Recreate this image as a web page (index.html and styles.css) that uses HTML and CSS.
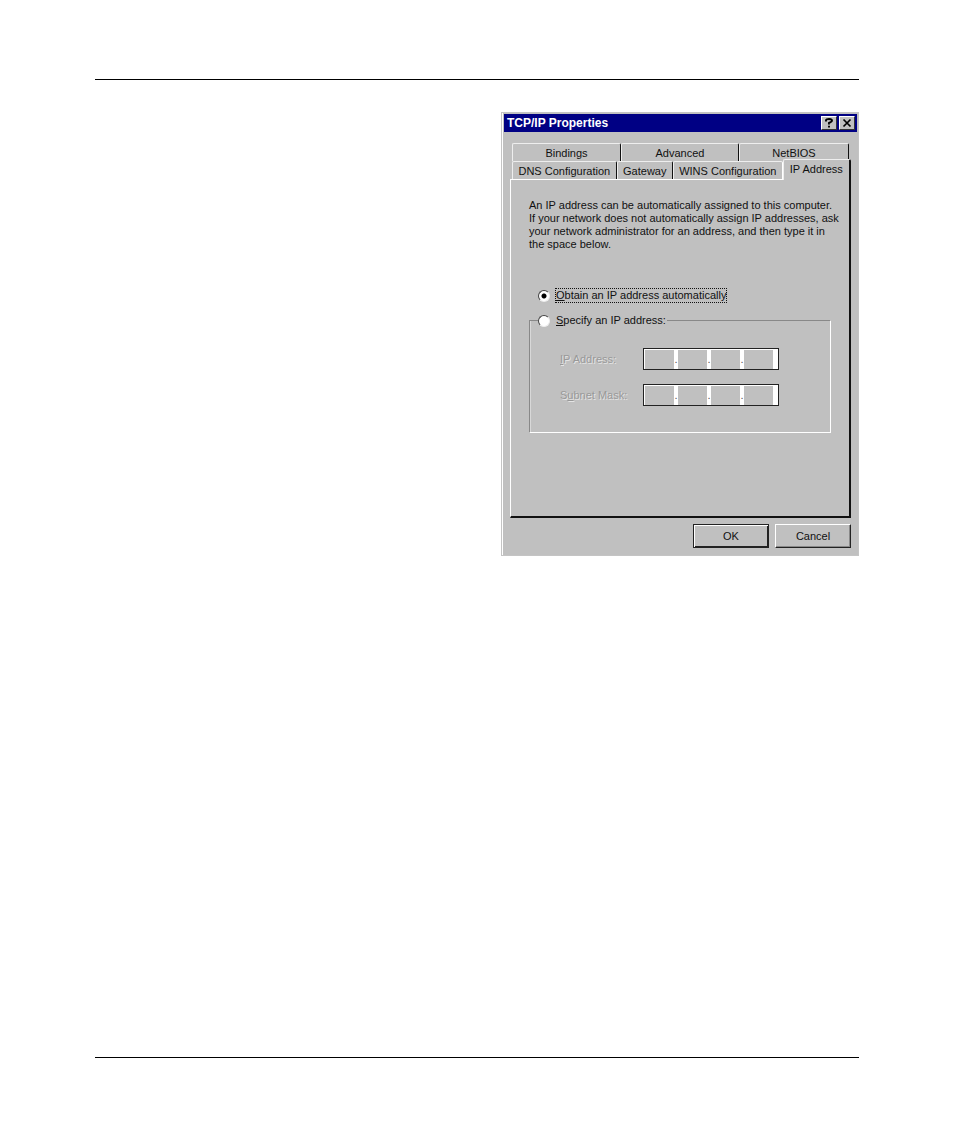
FILE: index.html
```html
<!DOCTYPE html>
<html lang="en">
<head>
<meta charset="utf-8">
<meta name="viewport" content="width=device-width, initial-scale=1">
<title>TCP/IP Properties</title>
<link rel="stylesheet" href="styles.css">
</head>
<body>
<main class="page">
  <form class="dialog" aria-labelledby="dialog-title">
    <header class="titlebar">
      <h1 class="title" id="dialog-title">TCP/IP Properties</h1>
      <button class="caption-button" type="button" aria-label="Help">
        <svg viewBox="0 0 10 10" width="10" height="10" aria-hidden="true"><path d="M2 3.500V2.200Q2 1 5 1T8 2.600Q8 3.800 5 5V6.500M5 7.800V9.500" fill="none" stroke="#000" stroke-width="1.900"/></svg>
      </button>
      <button class="caption-button" type="button" aria-label="Close">
        <svg viewBox="0 0 10 10" width="10" height="10" aria-hidden="true"><path d="M1.500 1.500L8.500 8.500M8.500 1.500L1.500 8.500" stroke="#000" stroke-width="1.700"/></svg>
      </button>
    </header>
    <div class="content">
      <div class="tabs" role="tablist">
        <div class="tab-row back">
          <button class="tab" type="button" role="tab">Bindings</button>
          <button class="tab" type="button" role="tab">Advanced</button>
          <button class="tab" type="button" role="tab">NetBIOS</button>
        </div>
        <div class="tab-row front">
          <button class="tab" type="button" role="tab">DNS Configuration</button>
          <button class="tab" type="button" role="tab">Gateway</button>
          <button class="tab before-selected" type="button" role="tab">WINS Configuration</button>
          <button class="tab selected" type="button" role="tab" aria-selected="true">IP Address</button>
        </div>
      </div>
      <section class="panel" role="tabpanel">
        <p class="intro">An IP address can be automatically assigned to this computer.<br>If your network does not automatically assign IP addresses, ask<br>your network administrator for an address, and then type it in<br>the space below.</p>
        <div class="option">
          <input class="radio" type="radio" name="mode" id="auto" checked>
          <label class="option-label focused" for="auto"><u>O</u>btain an IP address automatically</label>
        </div>
        <fieldset class="group">
          <legend class="legend">
            <input class="radio" type="radio" name="mode" id="manual">
            <label class="option-label" for="manual"><u>S</u>pecify an IP address:</label>
          </legend>
          <div class="fields">
            <label class="field-label" for="ip1"><u>I</u>P Address:</label>
            <div class="octets">
              <input class="octet" id="ip1" type="text" disabled><span class="dot">.</span>
              <input class="octet" aria-label="IP address part 2" type="text" disabled><span class="dot">.</span>
              <input class="octet" aria-label="IP address part 3" type="text" disabled><span class="dot">.</span>
              <input class="octet" aria-label="IP address part 4" type="text" disabled>
            </div>
            <label class="field-label" for="mask1">S<u>u</u>bnet Mask:</label>
            <div class="octets">
              <input class="octet" id="mask1" type="text" disabled><span class="dot">.</span>
              <input class="octet" aria-label="Subnet mask part 2" type="text" disabled><span class="dot">.</span>
              <input class="octet" aria-label="Subnet mask part 3" type="text" disabled><span class="dot">.</span>
              <input class="octet" aria-label="Subnet mask part 4" type="text" disabled>
            </div>
          </div>
        </fieldset>
      </section>
      <footer class="actions">
        <button class="button default" type="button">OK</button>
        <button class="button" type="button">Cancel</button>
      </footer>
    </div>
  </form>
</main>
</body>
</html>
```
FILE: styles.css
```css
* {
  box-sizing: border-box;
}

body {
  display: flex;
  flex-direction: column;
  min-height: 100vh;
  margin: 0;
  padding: 79px 95px 87px;
  background: #fff;
  color: #111;
  font: 11px/13px "Liberation Sans", Arial, sans-serif;
}

button,
input {
  margin: 0;
  padding: 0;
  color: inherit;
  font: inherit;
}

.page {
  display: flex;
  flex: 1;
  align-items: flex-start;
  justify-content: flex-end;
  padding-top: 32px;
  border-top: 1px solid #000;
  border-bottom: 1px solid #000;
}

.dialog {
  width: 100%;
  max-width: 358px;
  padding: 1px 1px 0;
  border: 1px solid #c4c4c4;
  background: #c0c0c0;
  box-shadow: inset 1px 0 #fff;
}

/* Title bar */
.titlebar {
  display: flex;
  align-items: center;
  gap: 2px;
  height: 18px;
  margin-left: 1px;
  padding: 0 2px 0 3px;
  background: #000084;
}

.title {
  flex: 1;
  margin: 0;
  color: #fff;
  font-size: 12px;
  line-height: 18px;
}

.caption-button {
  display: grid;
  place-items: center;
  width: 16px;
  height: 14px;
  border: 1px solid;
  border-color: #fff #333 #333 #fff;
  background: #c0c0c0;
}

.content {
  padding: 11px 6px 7px 7px;
}

/* Tabs */
.tab-row {
  display: grid;
  padding: 0 2px;
}

.back {
  grid-template-columns: 109fr 118fr 110fr;
}

.front {
  grid-template-columns: 104fr 56fr 109fr 68fr;
  align-items: end;
  padding-right: 0;
}

.tab {
  height: 18px;
  padding-top: 2px;
  border: 0 solid;
  border-width: 1px 1px 0;
  border-color: #eee #111 #eee #eee;
  border-radius: 2px 2px 0 0;
  background: #c0c0c0;
  white-space: nowrap;
}

.before-selected {
  border-right-color: #fff;
}

.selected {
  height: 21px;
  margin-top: -3px;
  margin-bottom: -1px;
  padding: 0 0 2px;
  border-right-width: 2px;
  z-index: 1;
}

.panel {
  padding: 19px 18px 83px;
  border: 1px solid #fff;
  border-right: 2px solid #111;
  border-bottom: 2px solid #111;
}

.intro {
  margin: 0 -12px 37px 0;
}

/* Options */
.option,
.legend {
  display: flex;
  align-items: center;
  gap: 5px;
  padding: 0;
}

.option {
  padding-left: 9px;
}

.radio {
  appearance: none;
  width: 12px;
  height: 12px;
  border: 1px solid;
  border-color: #444 #eee #eee #444;
  border-radius: 50%;
  background: #fff;
}

.radio:checked {
  background: radial-gradient(circle, #000 0 2px, #fff 3px);
}

.option-label {
  border: 1px solid transparent;
}

.focused {
  border: 1px dotted #111;
}

.group {
  min-width: 0;
  margin: 10px 0 0;
  padding: 20px 51px 26px 30px;
  border: 1px solid #888;
  border-right-color: #fff;
  border-bottom-color: #fff;
  box-shadow: inset 1px 0 #d8d8d8;
}

.legend {
  margin-left: -22px;
}

.fields {
  display: grid;
  grid-template-columns: 1fr 136px;
  align-items: center;
  row-gap: 14px;
}

.field-label {
  color: #999;
  text-shadow: 1px 1px #e4e4e4;
}

.octets {
  display: flex;
  height: 22px;
  padding: 1px 0 0 1px;
  border: 1px solid #222;
  background: #fff;
}

.octet {
  width: 29px;
  border: 0;
  border-radius: 0;
  background: #c0c0c0;
}

.dot {
  width: 4px;
  color: #555;
  line-height: 18px;
  text-align: center;
}

/* Buttons */
.actions {
  display: flex;
  justify-content: flex-end;
  gap: 6px;
  padding-top: 6px;
}

.button {
  width: 76px;
  height: 24px;
  border: 1px solid;
  border-color: #fff #222 #222 #fff;
  background: #c0c0c0;
  box-shadow: inset -1px -1px #888;
}

.default {
  border-color: #222;
  box-shadow: inset 1px 1px #fff, inset -1px -1px #222;
}
```
